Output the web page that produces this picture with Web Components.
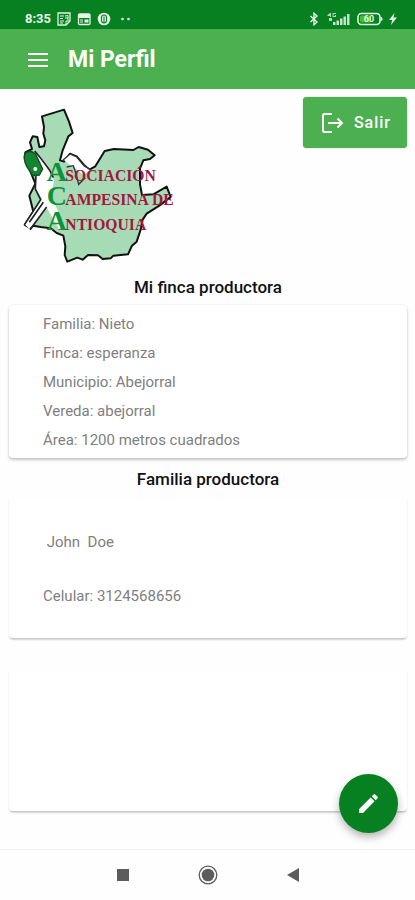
<!DOCTYPE html>
<html lang="es">
<head>
<meta charset="utf-8">
<meta name="viewport" content="width=device-width, initial-scale=1">
<title>Mi Perfil</title>
<style>
  body {
    margin: 0;
    background: #fefefe;
    color: #111;
    font-family: Roboto, "Liberation Sans", sans-serif;
  }
</style>
</head>
<body>
<profile-page></profile-page>

<script>
/**
 * StatusBar - clock, notifications and battery
 */
class StatusBar extends HTMLElement {
  constructor() {
    super();
    this.attachShadow({ mode: 'open' });
  }

  connectedCallback() {
    this.shadowRoot.innerHTML = `
      <style>
        :host {
          display: flex;
          align-items: center;
          justify-content: space-between;
          box-sizing: border-box;
          height: 29px;
          padding: 8px 18px 0 25px;
          background: #078022;
          color: #e4f5e6;
        }

        .group {
          display: flex;
          align-items: center;
          gap: 6px;
        }

        time {
          font-size: 13px;
          font-weight: 700;
          line-height: 16px;
        }

        svg {
          display: block;
        }
      </style>

      <div class="group">
        <time>${this.getAttribute('time')}</time>
        <svg width="14" height="14" viewBox="0 0 14 14" fill="none" stroke="currentColor">
          <path d="M1 1h12v8l-4 4H1z" stroke-width="1.3"/>
          <path d="M3 4h4M3 6.500h3M3 9h4M3 11h3M8 4l3-.5v5M8 6h3M13 9H9v4"/>
        </svg>
        <svg width="14" height="14" viewBox="0 0 14 14">
          <rect x="1.500" y="2" width="11.500" height="10.500" rx="1" fill="none" stroke="currentColor" stroke-width="1.300"/>
          <path d="M1 2h12v4H1zM7.500 7.500h4v3h-4zM3 7.500h3v1H3zM3 9.500h3v1H3z" fill="currentColor"/>
        </svg>
        <svg width="14" height="14" viewBox="0 0 14 14">
          <circle cx="7" cy="7" r="6.300" fill="currentColor"/>
          <path d="M4.500 7.500V5.500a2.500 2.500 0 0 1 5 0v2M7 4.500v6M4.500 7v1.500a2.500 2.500 0 0 0 5 0V7" fill="none" stroke="#078022" stroke-width="1.100"/>
        </svg>
        <svg width="20" height="14" viewBox="0 0 20 14" fill="currentColor">
          <circle cx="5.500" cy="7" r="1.300"/>
          <circle cx="11.500" cy="7" r="1.300"/>
        </svg>
      </div>

      <div class="group">
        <svg width="10" height="14" viewBox="0 0 10 14" fill="none" stroke="currentColor" stroke-width="1.400">
          <path d="M1.500 4l6.500 6-3 2.700V1.300L8 4l-6.500 6"/>
        </svg>
        <svg width="26" height="14" viewBox="0 0 26 14" fill="currentColor">
          <path d="M5 1h1v4H5V4H2.500V3zM7.500 1H11v1H8.500v2H10V3h1v2H7.500zM4 6h3v3H4z" opacity=".75"/>
          <path d="M8 10h2.500v3H8zM11.500 8.500H14V13h-2.500zM15 6.500h2.500V13H15zM18.500 4.500H21V13h-2.500zM22 2h2.500v11H22z" opacity=".85"/>
        </svg>
        <svg width="26" height="14" viewBox="0 0 26 14">
          <rect x="1" y="1.500" width="22" height="11" rx="3.500" fill="none" stroke="currentColor" stroke-width="1.600"/>
          <path d="M24 5c2 0 2 4 0 4z" fill="currentColor"/>
          <rect x="3" y="3.500" width="11" height="7" rx="1.500" fill="#3fc51c"/>
          <text x="12" y="10" font-size="9" font-weight="700" text-anchor="middle" fill="currentColor">60</text>
        </svg>
        <svg width="8" height="14" viewBox="0 0 8 14" fill="currentColor">
          <path d="M5.500 1L0 8h3.200L2 13l6-7.500H4.500z"/>
        </svg>
      </div>
    `;
  }
}

/**
 * AppBar - menu button and page title
 */
class AppBar extends HTMLElement {
  constructor() {
    super();
    this.attachShadow({ mode: 'open' });
  }

  connectedCallback() {
    this.shadowRoot.innerHTML = `
      <style>
        :host {
          display: flex;
          align-items: center;
          gap: 12px;
          box-sizing: border-box;
          height: 60px;
          padding: 2px 20px 0;
          background: #4caf50;
          color: #fff;
        }

        button {
          display: grid;
          place-items: center;
          width: 36px;
          height: 36px;
          padding: 0;
          border: 0;
          background: none;
          color: inherit;
        }

        h1 {
          margin: 0;
          font-size: 23px;
          font-weight: 700;
          line-height: 28px;
        }
      </style>

      <button type="button" aria-label="Menú">
        <svg width="20" height="14" viewBox="0 0 20 14" fill="currentColor">
          <path d="M0 0h20v2H0zM0 6h20v2H0zM0 12h20v2H0z"/>
        </svg>
      </button>
      <h1><slot></slot></h1>
    `;
  }
}

/**
 * AcaLogo - map of Antioquia with the association name
 */
class AcaLogo extends HTMLElement {
  constructor() {
    super();
    this.attachShadow({ mode: 'open' });
  }

  connectedCallback() {
    this.shadowRoot.innerHTML = `
      <style>
        :host {
          display: block;
        }

        svg {
          display: block;
          font-family: "Liberation Serif", serif;
          font-weight: 700;
        }
      </style>

      <svg width="180" height="180" viewBox="-3 6 540 540">
        <path d="M96 64L162 44L177 80L188 114L175 124L158 166L150 196L162 200L180 176L200 184L222 210L238 224L256 214L284 168L312 162L370 165L386 156L414 164L434 181L420 192L400 196L390 220L390 268L396 300L430 298L470 275L482 306L448 332L410 356L398 374L392 404L380 440L366 452L354 478L310 482L302 490L278 492L264 481L234 480L218 494L202 488L172 500L164 480L166 454L160 422L140 414L122 400L92 396L70 392L62 400L44 390L70 350L58 302L76 266L60 226L44 188L46 172L66 162L60 142L68 124L82 126L88 156L102 154L106 136L100 116L102 96Z"
          fill="#a6dbb6" stroke="#111" stroke-width="6" stroke-linejoin="round"/>
        <path d="M158 192L180 178L200 186L222 214L240 226L220 240L196 220L178 208Z" fill="#fff"/>
        <path d="M156 198L180 177L200 186L222 212L242 224M170 216L190 212L198 236L206 268L226 248" fill="none" stroke="#333" stroke-width="4"/>
        <path d="M76 172L96 190L120 222L132 256L124 300L142 344L168 402L148 404L118 352L98 314L78 282L78 240Z" fill="#fff"/>
        <path d="M98 308L44 388L58 402L112 338Z" fill="#fff"/>
        <path d="M74 168L94 192L118 224L130 248M78 238L76 282L92 314L44 388M110 336L60 404M100 322L58 382" fill="none" stroke="#222" stroke-width="5"/>
        <path d="M46 174Q60 164 76 176L98 222L88 240L68 242L50 214Q38 190 46 174Z" fill="#118532" stroke="#174b25" stroke-width="4"/>
        <circle cx="76" cy="222" r="6" fill="#fff"/>
        <g fill="#0c9239" font-size="84">
          <text x="110" y="257">A</text>
          <text x="110" y="331">C</text>
          <text x="110" y="404">A</text>
        </g>
        <g fill="#a3173f" font-size="47">
          <text x="166" y="257">SOCIACIÓN</text>
          <text x="166" y="330">AMPESINA DE</text>
          <text x="166" y="404">NTIOQUIA</text>
        </g>
      </svg>
    `;
  }
}

/**
 * LogoutButton - icon plus slotted label
 */
class LogoutButton extends HTMLElement {
  constructor() {
    super();
    this.attachShadow({ mode: 'open' });
  }

  connectedCallback() {
    this.shadowRoot.innerHTML = `
      <style>
        :host {
          display: block;
        }

        button {
          display: flex;
          align-items: center;
          gap: 10px;
          height: 51px;
          padding: 0 16px 0 18px;
          border: 0;
          border-radius: 4px;
          background: #4caf50;
          color: #fff;
          font: 500 16px/20px Roboto, "Liberation Sans", sans-serif;
          letter-spacing: 1px;
          box-shadow: 0 0 1px #2f8f38;
        }
      </style>

      <button type="button">
        <svg width="23" height="20" viewBox="0 0 23 20" fill="none" stroke="currentColor" stroke-width="2">
          <path d="M11 1H3.500Q2 1 2 2.500v15Q2 19 3.500 19H11M7 10h14M16.500 5.500L21 10l-4.500 4.500"/>
        </svg>
        <slot></slot>
      </button>
    `;
  }
}

/**
 * InfoCard - raised card, slotted lines
 */
class InfoCard extends HTMLElement {
  constructor() {
    super();
    this.attachShadow({ mode: 'open' });
  }

  connectedCallback() {
    this.shadowRoot.innerHTML = `
      <style>
        :host {
          display: block;
          box-sizing: border-box;
          padding: 5px 34px 3px;
          border-radius: 4px;
          background: #fff;
          box-shadow: 0 2px 3px rgba(0, 0, 0, 0.22), 0 0 2px rgba(0, 0, 0, 0.1);
          color: #808080;
          font-size: 15px;
          font-weight: 400;
          line-height: 29px;
        }

        :host([tall]) {
          min-height: 141px;
          padding: 18px 34px 15px;
          line-height: 54px;
          box-shadow: 0 3px 2px -1px rgba(0, 0, 0, 0.14), 0 1px 2px rgba(0, 0, 0, 0.12);
        }

        ::slotted(p) {
          margin: 0;
          white-space: pre-wrap;
        }
      </style>

      <slot></slot>
    `;
  }
}

/**
 * EditFab - floating edit button
 */
class EditFab extends HTMLElement {
  constructor() {
    super();
    this.attachShadow({ mode: 'open' });
  }

  connectedCallback() {
    this.shadowRoot.innerHTML = `
      <style>
        :host {
          display: block;
        }

        button {
          display: grid;
          place-items: center;
          width: 59px;
          height: 59px;
          padding: 0;
          border: 0;
          border-radius: 50%;
          background: #078022;
          color: #fff;
          box-shadow: 0 4px 8px rgba(0, 0, 0, 0.3);
        }
      </style>

      <button type="button" aria-label="Editar">
        <svg width="25" height="25" viewBox="0 0 24 24" fill="currentColor">
          <path d="M3 17.250V21h3.750L17.810 9.940l-3.750-3.750L3 17.250zM20.710 7.040a1 1 0 0 0 0-1.410l-2.340-2.340a1 1 0 0 0-1.410 0l-1.830 1.830 3.750 3.750 1.830-1.830z"/>
        </svg>
      </button>
    `;
  }
}

/**
 * NavBar - system navigation
 */
class NavBar extends HTMLElement {
  constructor() {
    super();
    this.attachShadow({ mode: 'open' });
  }

  connectedCallback() {
    this.shadowRoot.innerHTML = `
      <style>
        :host {
          display: flex;
          align-items: center;
          justify-content: center;
          gap: 61px;
          height: 50px;
          border-top: 1px solid #f2f2f2;
          color: #5c5c5c;
        }

        button {
          display: grid;
          place-items: center;
          width: 24px;
          height: 24px;
          padding: 0;
          border: 0;
          background: none;
          color: inherit;
        }
      </style>

      <button type="button" aria-label="Recientes">
        <svg width="20" height="20" viewBox="0 0 20 20" fill="currentColor">
          <rect x="4" y="4" width="12" height="12"/>
        </svg>
      </button>
      <button type="button" aria-label="Inicio">
        <svg width="20" height="20" viewBox="0 0 20 20">
          <circle cx="10" cy="10" r="8.800" fill="none" stroke="currentColor" stroke-width="1.300"/>
          <circle cx="10" cy="10" r="6.300" fill="currentColor"/>
        </svg>
      </button>
      <button type="button" aria-label="Atrás">
        <svg width="20" height="20" viewBox="0 0 20 20" fill="currentColor">
          <path d="M4 10l12-7v14z"/>
        </svg>
      </button>
    `;
  }
}

/**
 * ProfilePage - full screen layout
 */
class ProfilePage extends HTMLElement {
  constructor() {
    super();
    this.attachShadow({ mode: 'open' });
  }

  connectedCallback() {
    this.shadowRoot.innerHTML = `
      <style>
        :host {
          display: flex;
          flex-direction: column;
          min-height: 100vh;
        }

        main {
          position: relative;
          flex: 1;
          padding: 8px 8px 0 9px;
        }

        .top {
          display: flex;
          align-items: flex-start;
          justify-content: space-between;
        }

        h2 {
          margin: 0;
          font-size: 17px;
          font-weight: 500;
          line-height: 20px;
          padding: 11px 0 8px;
          text-align: center;
        }

        .top + h2 {
          padding-top: 0;
        }

        info-card + info-card {
          margin-top: 32px;
        }

        edit-fab {
          position: absolute;
          right: 17px;
          bottom: 16px;
        }
      </style>

      <status-bar time="8:35"></status-bar>
      <app-bar>Mi Perfil</app-bar>
      <main>
        <div class="top">
          <aca-logo></aca-logo>
          <logout-button>Salir</logout-button>
        </div>

        <h2>Mi finca productora</h2>
        <info-card>
          <p>Familia: Nieto</p>
          <p>Finca: esperanza</p>
          <p>Municipio: Abejorral</p>
          <p>Vereda: abejorral</p>
          <p>Área: 1200 metros cuadrados</p>
        </info-card>

        <h2>Familia productora</h2>
        <info-card tall>
          <p> John  Doe</p>
          <p>Celular: 3124568656</p>
        </info-card>
        <info-card tall></info-card>

        <edit-fab></edit-fab>
      </main>
      <nav-bar></nav-bar>
    `;
  }
}

customElements.define('status-bar', StatusBar);
customElements.define('app-bar', AppBar);
customElements.define('aca-logo', AcaLogo);
customElements.define('logout-button', LogoutButton);
customElements.define('info-card', InfoCard);
customElements.define('edit-fab', EditFab);
customElements.define('nav-bar', NavBar);
customElements.define('profile-page', ProfilePage);
</script>
</body>
</html>
